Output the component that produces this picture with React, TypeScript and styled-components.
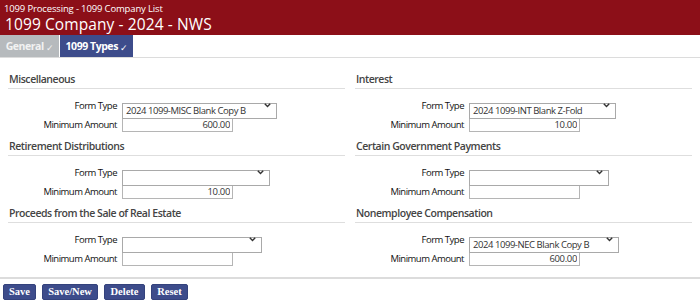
import React from "react";
import styled, { createGlobalStyle } from "styled-components";

const Global = createGlobalStyle`
  html, body { margin: 0; padding: 0; background: #fff; }
  body { font-family: "Open Sans", "Noto Sans", sans-serif; color: #333; }
  * { box-sizing: border-box; }
`;

const Page = styled.div`
  width: 700px;
  height: 302px;
  display: flex;
  flex-direction: column;
  overflow: hidden;
`;

const Header = styled.header`
  background: #8c0f18;
  height: 35px;
  padding: 3px 5px 0 4px;
  color: #fff;
  display: flex;
  flex-direction: column;
  gap: 2px;
`;

const Crumb = styled.div`
  font-size: 9.5px;
  line-height: 11px;
  letter-spacing: -0.15px;
`;

const Title = styled.h1`
  margin: 0;
  font-weight: 400;
  font-size: 15.5px;
  line-height: 17px;
  padding-left: 1px;
  letter-spacing: 0.1px;
`;

const TabBar = styled.nav`
  display: flex;
  height: 23px;
  border-bottom: 1px solid #dcdcdc;
`;

const Tab = styled.div<{ $active?: boolean }>`
  display: flex;
  align-items: center;
  justify-content: center;
  gap: 2px;
  width: ${(p) => (p.$active ? "73px" : "59px")};
  height: 22px;
  margin-right: 1px;
  background: ${(p) => (p.$active ? "#3d4c8b" : "#b6babd")};
  color: ${(p) => (p.$active ? "#fff" : "#f2f2f2")};
  font-size: 10.5px;
  font-weight: 700;
  letter-spacing: -0.45px;
`;

const Check = styled.span`
  font-size: 9px;
  font-weight: 400;
  margin-top: 2px;
`;

const Body = styled.main`
  flex: 1;
  display: grid;
  grid-template-columns: 1fr 1fr;
  column-gap: 10px;
  padding: 14px 8px 0 8px;
  align-content: start;
`;

const Column = styled.div`
  display: flex;
  flex-direction: column;
`;

const Section = styled.section`
  display: flex;
  flex-direction: column;
  margin-bottom: 7px;
`;

const SectionTitle = styled.h2`
  margin: 0 0 8px 0;
  font-size: 10.5px;
  font-weight: 600;
  color: #444;
  letter-spacing: -0.45px;
  line-height: 14px;
  padding: 0 0 2px 1px;
  border-bottom: 1px solid #dedede;
`;

const Row = styled.div`
  display: flex;
  align-items: center;
  & + & {
    margin-top: 4px;
  }
`;

const Label = styled.label`
  width: 109px;
  margin-right: 5px;
  text-align: right;
  font-size: 9.5px;
  font-weight: 500;
  letter-spacing: -0.5px;
  color: #111;
  white-space: nowrap;
`;

const SelectWrap = styled.div<{ $w: number }>`
  position: relative;
  width: ${(p) => p.$w}px;
  height: 16px;
`;

const Select = styled.select`
  appearance: none;
  width: 100%;
  height: 100%;
  border: 1px solid #a9a9a9;
  border-radius: 0;
  background: #fff;
  font-family: "Open Sans", "Noto Sans", sans-serif;
  font-size: 9.5px;
  letter-spacing: -0.45px;
  color: #333;
  padding: 0 0 0 3px;
  margin: 0;
  outline: none;
`;

const Chevron = styled.svg`
  position: absolute;
  right: 6px;
  top: 6px;
  width: 7px;
  height: 5px;
  pointer-events: none;
`;

const Input = styled.input`
  width: 111px;
  height: 15px;
  border: 1px solid #b5b5b5;
  font-family: "Open Sans", "Noto Sans", sans-serif;
  font-size: 9.5px;
  letter-spacing: -0.35px;
  color: #333;
  text-align: right;
  padding: 0 2px;
  margin: 0;
  outline: none;
`;

const Footer = styled.footer`
  border-top: 2px solid #dcdcdc;
  padding: 5px 3px 2px 3px;
  display: flex;
  gap: 6px;
`;

const Button = styled.button<{ $w: number }>`
  width: ${(p) => p.$w}px;
  height: 16px;
  background: #3d4c8b;
  border: 1px solid #34427c;
  border-radius: 2px;
  color: #fff;
  font-family: "Liberation Serif", "Times New Roman", serif;
  font-weight: 700;
  font-size: 10.5px;
  padding: 0;
  line-height: 14px;
`;

type Sec = {
  title: string;
  formType: string;
  selectW: number;
  amount: string;
};

const left: Sec[] = [
  { title: "Miscellaneous", formType: "2024 1099-MISC Blank Copy B", selectW: 155, amount: "600.00" },
  { title: "Retirement Distributions", formType: "", selectW: 148, amount: "10.00" },
  { title: "Proceeds from the Sale of Real Estate", formType: "", selectW: 140, amount: "" },
];

const right: Sec[] = [
  { title: "Interest", formType: "2024 1099-INT Blank Z-Fold", selectW: 147, amount: "10.00" },
  { title: "Certain Government Payments", formType: "", selectW: 140, amount: "" },
  { title: "Nonemployee Compensation", formType: "2024 1099-NEC Blank Copy B", selectW: 150, amount: "600.00" },
];

function FormSection({ s }: { s: Sec }) {
  return (
    <Section>
      <SectionTitle>{s.title}</SectionTitle>
      <Row>
        <Label>Form Type</Label>
        <SelectWrap $w={s.selectW}>
          <Select defaultValue={s.formType}>
            <option value={s.formType}>{s.formType}</option>
          </Select>
          <Chevron viewBox="0 0 7 5">
            <path d="M0.8 0.8 L3.5 3.6 L6.2 0.8" fill="none" stroke="#333" strokeWidth="1.4" />
          </Chevron>
        </SelectWrap>
      </Row>
      <Row>
        <Label>Minimum Amount</Label>
        <Input defaultValue={s.amount} />
      </Row>
    </Section>
  );
}

export default function App() {
  return (
    <Page>
      <Global />
      <Header>
        <Crumb>1099 Processing - 1099 Company List</Crumb>
        <Title>1099 Company - 2024 - NWS</Title>
      </Header>
      <TabBar>
        <Tab>
          General<Check>✓</Check>
        </Tab>
        <Tab $active>
          1099 Types<Check>✓</Check>
        </Tab>
      </TabBar>
      <Body>
        <Column>
          {left.map((s) => (
            <FormSection key={s.title} s={s} />
          ))}
        </Column>
        <Column>
          {right.map((s) => (
            <FormSection key={s.title} s={s} />
          ))}
        </Column>
      </Body>
      <Footer>
        <Button $w={33}>Save</Button>
        <Button $w={56}>Save/New</Button>
        <Button $w={41}>Delete</Button>
        <Button $w={37}>Reset</Button>
      </Footer>
    </Page>
  );
}
